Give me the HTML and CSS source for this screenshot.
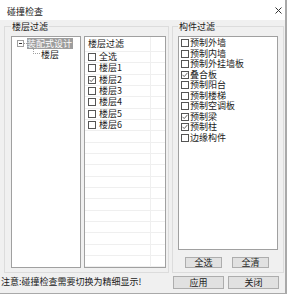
FILE: index.html
```html
<!DOCTYPE html>
<html lang="zh">
<head>
<meta charset="utf-8">
<link rel="stylesheet" href="styles.css">
</head>
<body>
<div class="dialog">
  <div class="titlebar">
    <span class="title">碰撞检查</span>
    <svg class="close" width="7" height="7" viewBox="0 0 7 7"><path d="M0.5 0.5L6.5 6.5M6.5 0.5L0.5 6.5" stroke="#333" stroke-width="1" fill="none"/></svg>
  </div>
  <div class="main">
    <fieldset class="group group-floor">
      <legend>楼层过滤</legend>
      <div class="tree">
        <div class="tree-row">
          <svg class="expander" width="7" height="7" viewBox="0 0 7 7"><rect x="0.5" y="0.5" width="6" height="6" fill="#fff" stroke="#a0a0a0"/><path d="M2 3.5H5" stroke="#333"/></svg>
          <span class="dash"></span>
          <span class="node selected">装配式设计</span>
        </div>
        <div class="tree-row child">
          <span class="elbow"></span>
          <span class="node">楼层</span>
        </div>
      </div>
      <div class="grid-list">
        <div class="grid-head"><span class="cell">楼层过滤</span><span class="cell2"></span></div>
        <div class="grid-row"><span class="cell"><span class="cb"></span>全选</span><span class="cell2"></span></div>
        <div class="grid-row"><span class="cell"><span class="cb"></span>楼层1</span><span class="cell2"></span></div>
        <div class="grid-row"><span class="cell"><span class="cb on"><svg width="6" height="6" viewBox="0 0 6 6"><polyline points="0.5,2.8 2.2,4.6 5.5,0.8" fill="none" stroke="#666" stroke-width="1"/></svg></span>楼层2</span><span class="cell2"></span></div>
        <div class="grid-row"><span class="cell"><span class="cb"></span>楼层3</span><span class="cell2"></span></div>
        <div class="grid-row"><span class="cell"><span class="cb"></span>楼层4</span><span class="cell2"></span></div>
        <div class="grid-row"><span class="cell"><span class="cb"></span>楼层5</span><span class="cell2"></span></div>
        <div class="grid-row"><span class="cell"><span class="cb"></span>楼层6</span><span class="cell2"></span></div>
        <div class="grid-row"><span class="cell"></span><span class="cell2"></span></div>
        <div class="grid-row"><span class="cell"></span><span class="cell2"></span></div>
        <div class="grid-row"><span class="cell"></span><span class="cell2"></span></div>
        <div class="grid-row"><span class="cell"></span><span class="cell2"></span></div>
        <div class="grid-row"><span class="cell"></span><span class="cell2"></span></div>
        <div class="grid-row"><span class="cell"></span><span class="cell2"></span></div>
        <div class="grid-row"><span class="cell"></span><span class="cell2"></span></div>
        <div class="grid-row"><span class="cell"></span><span class="cell2"></span></div>
        <div class="grid-row"><span class="cell"></span><span class="cell2"></span></div>
        <div class="grid-row"><span class="cell"></span><span class="cell2"></span></div>
        <div class="grid-row"><span class="cell"></span><span class="cell2"></span></div>
        <div class="grid-row"><span class="cell"></span><span class="cell2"></span></div>
        <div class="grid-row"><span class="cell"></span><span class="cell2"></span></div>
      </div>
    </fieldset>
    <fieldset class="group group-comp">
      <legend>构件过滤</legend>
      <div class="comp-list">
        <div class="item"><span class="cb"></span>预制外墙</div>
        <div class="item"><span class="cb"></span>预制内墙</div>
        <div class="item"><span class="cb"></span>预制外挂墙板</div>
        <div class="item"><span class="cb on"><svg width="6" height="6" viewBox="0 0 6 6"><polyline points="0.5,2.8 2.2,4.6 5.5,0.8" fill="none" stroke="#666" stroke-width="1"/></svg></span>叠合板</div>
        <div class="item"><span class="cb"></span>预制阳台</div>
        <div class="item"><span class="cb"></span>预制楼梯</div>
        <div class="item"><span class="cb"></span>预制空调板</div>
        <div class="item"><span class="cb on"><svg width="6" height="6" viewBox="0 0 6 6"><polyline points="0.5,2.8 2.2,4.6 5.5,0.8" fill="none" stroke="#666" stroke-width="1"/></svg></span>预制梁</div>
        <div class="item"><span class="cb on"><svg width="6" height="6" viewBox="0 0 6 6"><polyline points="0.5,2.8 2.2,4.6 5.5,0.8" fill="none" stroke="#666" stroke-width="1"/></svg></span>预制柱</div>
        <div class="item"><span class="cb"></span>边缘构件</div>
      </div>
      <div class="sel-buttons">
        <button class="btn small">全选</button>
        <button class="btn small">全清</button>
      </div>
    </fieldset>
  </div>
  <div class="footer">
    <span class="note">注意:碰撞检查需要切换为精细显示!</span>
    <div class="actions">
      <button class="btn big">应用</button>
      <button class="btn big">关闭</button>
    </div>
  </div>
</div>
</body>
</html>
```
FILE: styles.css
```css
* { box-sizing: border-box; }
html, body { margin: 0; padding: 0; }
body {
  background: #fff;
  font-family: "Noto Sans CJK SC", "Noto Sans", sans-serif;
  font-size: 9px;
  line-height: 11px;
  color: #1a1a1a;
  width: 294px;
  height: 298px;
  overflow: hidden;
}
.dialog {
  width: 287px;
  height: 294px;
  background: #f0f0f0;
  border-right: 2px solid #a9a9a9;
  border-bottom: 1px solid #a9a9a9;
  display: flex;
  flex-direction: column;
}
.titlebar {
  height: 20px;
  flex: none;
  background: #fff;
  display: flex;
  align-items: center;
  justify-content: space-between;
  padding: 2px 3px 0 7px;
}
.title { line-height: 11px; }
.close { display: block; margin-top: -2px; }
.main {
  height: 253px;
  flex: none;
  display: flex;
  padding-top: 1px;
}
.group {
  margin: 0;
  border: 1px solid #dcdcdc;
  height: 252px;
  min-width: 0;
}
.group legend {
  padding: 0 1px;
  font-size: 9px;
  line-height: 11px;
}
.group-floor {
  margin-left: 4px;
  width: 165px;
  padding: 4px 2px 4px 6px;
  display: flex;
  gap: 3px;
}
.group-comp {
  margin-left: 3px;
  width: 112px;
  padding: 4px 5px 4px 5px;
  display: flex;
  flex-direction: column;
}
.tree {
  width: 70px;
  height: 232px;
  background: #fff;
  border: 1px solid #a0a0a0;
  padding: 1px 0 0 5px;
}
.tree-row {
  height: 11px;
  display: flex;
  align-items: center;
}
.expander { display: block; flex: none; }
.dash {
  width: 3px;
  height: 0;
  border-top: 1px dotted #a0a0a0;
}
.node { line-height: 11px; white-space: nowrap; }
.node.selected {
  background: #9d9d9d;
  color: #fff;
  padding: 0 1px 0 0;
}
.tree-row.child { align-items: flex-start; }
.elbow {
  margin-left: 16px;
  width: 7px;
  height: 5px;
  border-left: 1px dotted #a0a0a0;
  border-bottom: 1px dotted #a0a0a0;
  margin-right: 1px;
}
.grid-list {
  width: 82px;
  height: 232px;
  background: #fff;
  border: 1px solid #a0a0a0;
  overflow: hidden;
}
.grid-head, .grid-row {
  display: grid;
  grid-template-columns: 66px 1fr;
  border-bottom: 1px solid #efefef;
}
.grid-head { height: 15px; }
.grid-head .cell { padding: 1px 0 0 3px; align-items: flex-start; }
.grid-row { height: 11.33px; line-height: 10px; }
.cell {
  display: flex;
  align-items: center;
  padding-left: 3px;
  border-right: 1px solid #efefef;
  white-space: nowrap;
}
.cb {
  width: 8px;
  height: 8px;
  flex: none;
  border: 1px solid #555;
  background: #fff;
  margin-right: 3px;
  display: flex;
  align-items: center;
  justify-content: center;
}
.cb svg { display: block; }
.comp-list {
  height: 214px;
  flex: none;
  background: #fff;
  border: 1px solid #a0a0a0;
  padding: 1px 0 0 2px;
}
.item {
  height: 10.5px;
  line-height: 10px;
  display: flex;
  align-items: center;
  white-space: nowrap;
}
.item .cb { margin-right: 1px; }
.sel-buttons {
  margin-top: 7px;
  display: flex;
  gap: 10px;
  padding-left: 7px;
}
.btn {
  font-family: inherit;
  font-size: 9px;
  line-height: 9px;
  color: #1a1a1a;
  background: #e1e1e1;
  border: 1px solid #adadad;
  padding: 0;
  margin: 0;
  border-radius: 0;
}
.btn.small { width: 37px; height: 11px; }
.btn.big { width: 51px; height: 13px; }
.footer {
  flex: 1;
  display: flex;
  align-items: flex-start;
  padding: 3px 6px 0 1px;
}
.note { flex: 1; line-height: 11px; white-space: nowrap; }
.actions { display: flex; gap: 4px; }
```
